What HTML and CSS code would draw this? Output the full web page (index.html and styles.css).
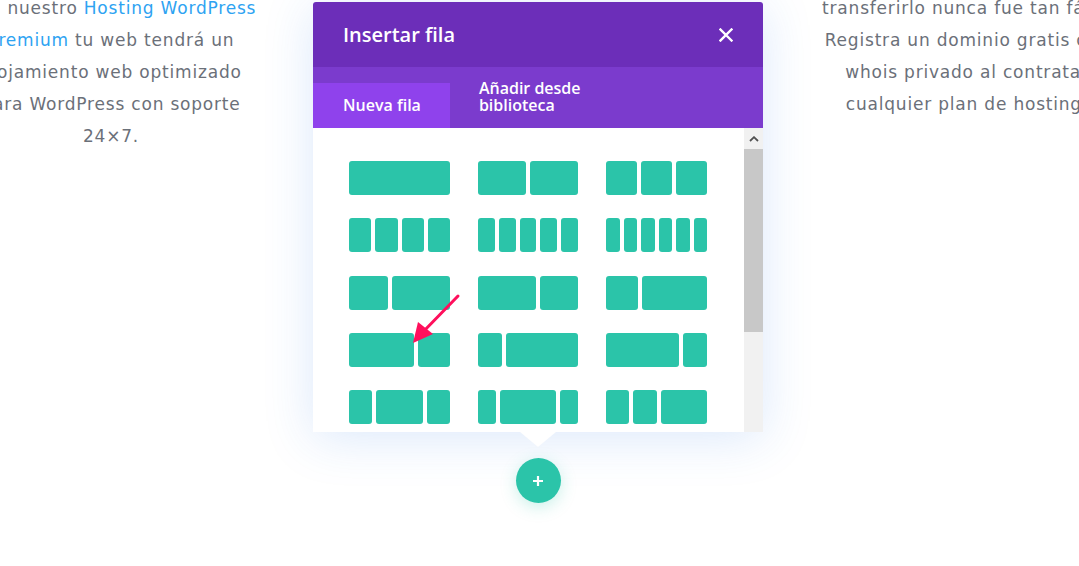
FILE: index.html
```html
<!DOCTYPE html>
<html lang="es">
<head>
<meta charset="utf-8">
<title>Insertar fila</title>
<link rel="stylesheet" href="styles.css">
</head>
<body>
<div class="page">
  <div class="cols">
    <div class="col">
      <p class="txt">Con nuestro <a class="lnk">Hosting WordPress</a><br><a class="lnk">Premium</a> tu web tendrá un<br>alojamiento web optimizado<br>para WordPress con soporte<br>24×7.</p>
    </div>
    <div class="col"></div>
    <div class="col">
      <p class="txt">transferirlo nunca fue tan fácil.<br>Registra un dominio gratis con<br>whois privado al contratar<br>cualquier plan de hosting.</p>
    </div>
  </div>
</div>

<div class="popup">
  <div class="modal">
    <div class="m-head">
      <span class="m-title">Insertar fila</span>
      <svg class="close" width="14" height="14" viewBox="0 0 14 14"><path d="M1.5 1.5L12.5 12.5M12.5 1.5L1.5 12.5" stroke="#fff" stroke-width="2.4" stroke-linecap="square"/></svg>
    </div>
    <div class="tabs">
      <div class="tab tab-active">Nueva fila</div>
      <div class="tab tab-lib">Añadir desde biblioteca</div>
    </div>
    <div class="m-body">
      <div class="grid-wrap">
        <div class="grid">
          <div class="lay"><i class="b g1"></i></div>
          <div class="lay"><i class="b g1"></i><i class="b g1"></i></div>
          <div class="lay"><i class="b g1"></i><i class="b g1"></i><i class="b g1"></i></div>

          <div class="lay"><i class="b g1"></i><i class="b g1"></i><i class="b g1"></i><i class="b g1"></i></div>
          <div class="lay"><i class="b g1"></i><i class="b g1"></i><i class="b g1"></i><i class="b g1"></i><i class="b g1"></i></div>
          <div class="lay"><i class="b g1"></i><i class="b g1"></i><i class="b g1"></i><i class="b g1"></i><i class="b g1"></i><i class="b g1"></i></div>

          <div class="lay"><i class="b g2"></i><i class="b g3"></i></div>
          <div class="lay"><i class="b g3"></i><i class="b g2"></i></div>
          <div class="lay"><i class="b g1"></i><i class="b g2"></i></div>

          <div class="lay"><i class="b g2"></i><i class="b g1"></i></div>
          <div class="lay"><i class="b g1"></i><i class="b g3"></i></div>
          <div class="lay"><i class="b g3"></i><i class="b g1"></i></div>

          <div class="lay"><i class="b g1"></i><i class="b g2"></i><i class="b g1"></i></div>
          <div class="lay"><i class="b g1"></i><i class="b g3"></i><i class="b g1"></i></div>
          <div class="lay"><i class="b g1"></i><i class="b g1"></i><i class="b g2"></i></div>

          <div class="lay"><i class="b g1"></i><i class="b g1"></i><i class="b g1"></i><i class="b g3"></i></div>
          <div class="lay"><i class="b g3"></i><i class="b g1"></i><i class="b g1"></i><i class="b g1"></i></div>
          <div class="lay"><i class="b g1"></i><i class="b g2"></i><i class="b g1"></i></div>
        </div>
      </div>
      <div class="scrollbar">
        <div class="sb-btn"><svg width="10" height="6" viewBox="0 0 10 6"><path d="M1 5L5 1.2L9 5" fill="none" stroke="#505050" stroke-width="1.8"/></svg></div>
        <div class="sb-thumb"></div>
        <div class="sb-track"></div>
      </div>
    </div>
  </div>
  <div class="pointer"></div>
  <div class="add"><svg width="12" height="12" viewBox="0 0 12 12"><path d="M6 1V11M1 6H11" stroke="#fff" stroke-width="2.2"/></svg></div>
</div>

<svg class="arrow" width="1079" height="566" viewBox="0 0 1079 566">
  <line x1="458" y1="296" x2="421" y2="334" stroke="#ff0f5c" stroke-width="3" stroke-linecap="round"/>
  <polygon points="413,343 418,322 433,334" fill="#ff0f5c"/>
</svg>
</body>
</html>
```

FILE: styles.css
```css
html, body {
  margin: 0;
  padding: 0;
  width: 1079px;
  height: 566px;
  overflow: hidden;
  background: #fff;
}

.page {
  width: 1079px;
  height: 566px;
}

.cols {
  display: flex;
  gap: 108px;
  margin-left: -49px;
  margin-top: -8px;
}

.col {
  width: 320px;
  flex: 0 0 320px;
}

.txt {
  margin: 0;
  font-family: "DejaVu Sans", sans-serif;
  font-size: 17px;
  letter-spacing: 0.8px;
  line-height: 32px;
  color: #6b7079;
  text-align: center;
  white-space: nowrap;
}

.lnk {
  color: #2ea3f2;
  text-decoration: none;
}

.popup {
  position: absolute;
  left: 313px;
  top: 2px;
  width: 450px;
  display: flex;
  flex-direction: column;
  align-items: center;
}

.modal {
  width: 450px;
  border-radius: 3px 3px 0 0;
  overflow: hidden;
  box-shadow: 0 6px 50px rgba(40, 120, 230, 0.17);
  font-family: "Open Sans", sans-serif;
  background: #fff;
}

.m-head {
  height: 65px;
  background: #6c2eb9;
  display: flex;
  align-items: center;
  justify-content: space-between;
  padding: 0 30px;
}

.m-title {
  color: #fff;
  font-size: 20px;
  font-weight: 600;
}

.close {
  display: block;
}

.tabs {
  height: 61px;
  background: #7b3bcd;
  display: flex;
  align-items: flex-end;
}

.tab {
  color: #fff;
  font-size: 16px;
  font-weight: 600;
  line-height: 17px;
}

.tab-active {
  height: 45px;
  display: flex;
  align-items: center;
  padding: 0 29px 0 30px;
  background: #8f42ec;
  box-sizing: border-box;
}

.tab-lib {
  width: 112px;
  padding: 13px 29px 14px;
}

.m-body {
  height: 304px;
  display: flex;
}

.grid-wrap {
  flex: 1;
  overflow: hidden;
  padding: 33px 0 0 36px;
}

.grid {
  display: grid;
  grid-template-columns: 101px 100px 101px;
  grid-auto-rows: 34px;
  column-gap: 28px;
  row-gap: 23.25px;
}

.lay {
  display: flex;
  gap: 4px;
}

.b {
  display: block;
  background: #2bc4a9;
  border-radius: 3px;
}

.g1 { flex: 1 1 0; }
.g2 { flex: 2 1 0; }
.g3 { flex: 3 1 0; }

.scrollbar {
  width: 19px;
  display: flex;
  flex-direction: column;
  background: #f1f1f1;
}

.sb-btn {
  height: 21px;
  display: flex;
  align-items: center;
  justify-content: center;
}

.sb-thumb {
  height: 183px;
  background: #c8c8c8;
}

.sb-track {
  flex: 1;
}

.pointer {
  width: 0;
  height: 0;
  border-left: 18px solid transparent;
  border-right: 18px solid transparent;
  border-top: 15px solid #fff;
}

.add {
  margin-top: 11px;
  width: 45px;
  height: 45px;
  border-radius: 50%;
  background: #2bc4a9;
  box-shadow: 0 4px 16px rgba(43, 196, 169, 0.25);
  display: flex;
  align-items: center;
  justify-content: center;
}

.arrow {
  position: absolute;
  left: 0;
  top: 0;
  pointer-events: none;
}
```
